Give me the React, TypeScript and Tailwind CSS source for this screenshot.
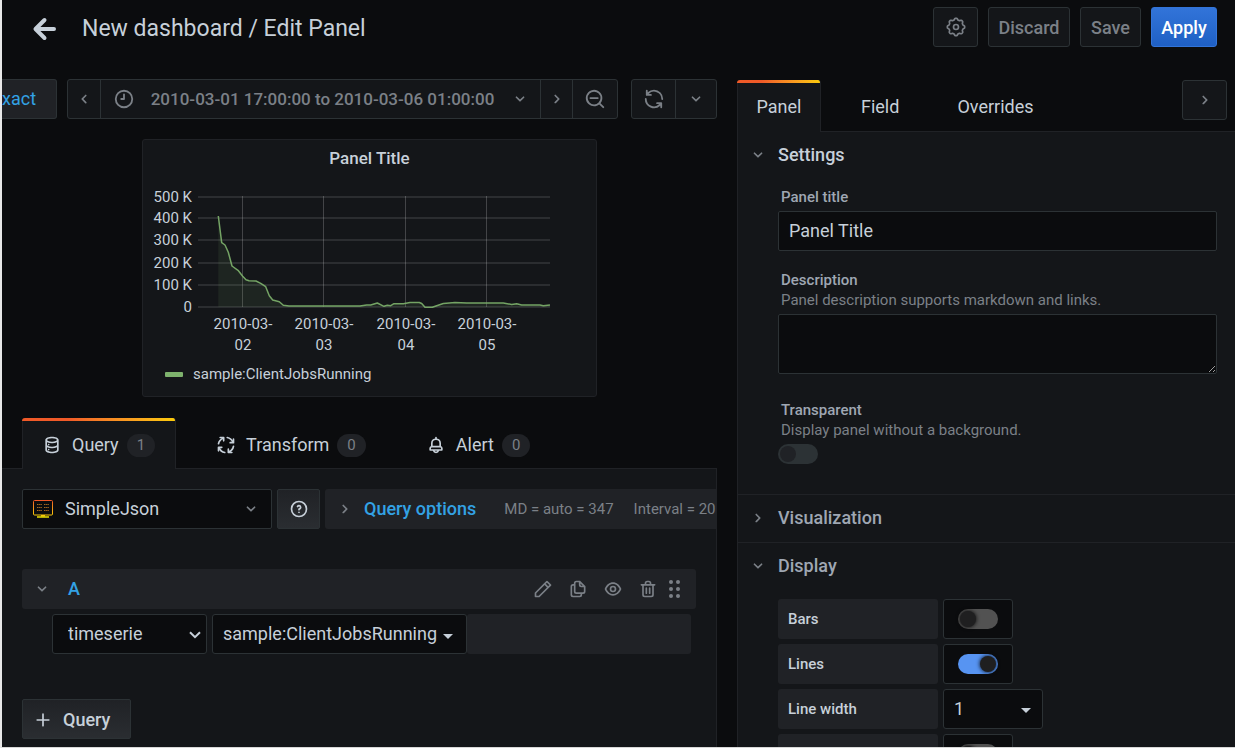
import React from "react";

const paths = {
  angleDown:
    "M17,9.17a1,1,0,0,0-1.41,0L12,12.71,8.46,9.17a1,1,0,0,0-1.41,0,1,1,0,0,0,0,1.42l4.24,4.24a1,1,0,0,0,1.42,0L17,10.59A1,1,0,0,0,17,9.17Z",
  angleRight:
    "M14.83,11.29,10.59,7.05a1,1,0,0,0-1.42,0,1,1,0,0,0,0,1.41L12.71,12,9.17,15.54a1,1,0,0,0,0,1.41,1,1,0,0,0,.71.29,1,1,0,0,0,.71-.29l4.24-4.24A1,1,0,0,0,14.83,11.29Z",
  angleLeft:
    "M11.29,12l3.54-3.54a1,1,0,0,0,0-1.41,1,1,0,0,0-1.42,0L9.17,11.29a1,1,0,0,0,0,1.42L13.41,17a1,1,0,0,0,.71.29,1,1,0,0,0,.71-.29,1,1,0,0,0,0-1.41Z",
  searchMinus:
    "M21.71,20.29,18,16.61A9,9,0,1,0,16.61,18l3.68,3.68a1,1,0,0,0,1.42,0A1,1,0,0,0,21.71,20.29ZM11,18a7,7,0,1,1,7-7A7,7,0,0,1,11,18Zm4-8H7a1,1,0,0,0,0,2h8a1,1,0,0,0,0-2Z",
  clock:
    "M12,2A10,10,0,1,0,22,12,10,10,0,0,0,12,2Zm0,18a8,8,0,1,1,8-8A8,8,0,0,1,12,20ZM12,6a1,1,0,0,0-1,1v4H9a1,1,0,0,0,0,2h3a1,1,0,0,0,1-1V7A1,1,0,0,0,12,6Z",
  sync:
    "M19.91,15.51H15.38a1,1,0,0,0,0,2h2.4A8,8,0,0,1,4,12a1,1,0,0,0-2,0,10,10,0,0,0,16.88,7.23V21a1,1,0,0,0,2,0V16.5A1,1,0,0,0,19.91,15.51ZM12,2A10,10,0,0,0,5.12,4.77V3a1,1,0,0,0-2,0V7.5a1,1,0,0,0,1,1h4.5a1,1,0,0,0,0-2H6.22A8,8,0,0,1,20,12a1,1,0,0,0,2,0A10,10,0,0,0,12,2Z",
  plus: "M19,11H13V5a1,1,0,0,0-2,0v6H5a1,1,0,0,0,0,2h6v6a1,1,0,0,0,2,0V13h6a1,1,0,0,0,0-2Z",
  question:
    "M11.29,15.29a1.58,1.58,0,0,0-.12.15.76.76,0,0,0-.09.18.64.64,0,0,0-.06.18,1.36,1.36,0,0,0,0,.2.84.84,0,0,0,.08.38.9.9,0,0,0,.54.54.94.94,0,0,0,.76,0,.9.9,0,0,0,.54-.54A1,1,0,0,0,13,16a1,1,0,0,0-.29-.71A1,1,0,0,0,11.29,15.29ZM12,2A10,10,0,1,0,22,12,10,10,0,0,0,12,2Zm0,18a8,8,0,1,1,8-8A8,8,0,0,1,12,20ZM12,7A3,3,0,0,0,9.4,8.5a1,1,0,1,0,1.73,1A1,1,0,0,1,12,9a1,1,0,0,1,0,2,1,1,0,0,0-1,1v1a1,1,0,0,0,2,0v-.18A3,3,0,0,0,12,7Z",
  trash:
    "M10,18a1,1,0,0,0,1-1V11a1,1,0,0,0-2,0v6A1,1,0,0,0,10,18ZM20,6H16V5a3,3,0,0,0-3-3H11A3,3,0,0,0,8,5V6H4A1,1,0,0,0,4,8H5V19a3,3,0,0,0,3,3h8a3,3,0,0,0,3-3V8h1a1,1,0,0,0,0-2ZM10,5a1,1,0,0,1,1-1h2a1,1,0,0,1,1,1V6H10Zm7,14a1,1,0,0,1-1,1H8a1,1,0,0,1-1-1V8H17Zm-3-1a1,1,0,0,0,1-1V11a1,1,0,0,0-2,0v6A1,1,0,0,0,14,18Z",
  eye:
    "M21.92,11.6C19.9,6.91,16.1,4,12,4S4.1,6.91,2.08,11.6a1,1,0,0,0,0,.8C4.1,17.09,7.9,20,12,20s7.9-2.91,9.92-7.6A1,1,0,0,0,21.92,11.6ZM12,18c-3.17,0-6.17-2.29-7.9-6C5.83,8.29,8.83,6,12,6s6.17,2.29,7.9,6C18.17,15.71,15.17,18,12,18ZM12,8a4,4,0,1,0,4,4A4,4,0,0,0,12,8Zm0,6a2,2,0,1,1,2-2A2,2,0,0,1,12,14Z",
  copy:
    "M21,8.94a1.31,1.31,0,0,0-.06-.27l0-.09a1.07,1.07,0,0,0-.19-.28h0l-6-6h0a1.07,1.07,0,0,0-.28-.19.32.32,0,0,0-.09,0A.88.88,0,0,0,14.05,2H10A3,3,0,0,0,7,5V6H6A3,3,0,0,0,3,9V19a3,3,0,0,0,3,3h8a3,3,0,0,0,3-3V18h1a3,3,0,0,0,3-3V9S21,9,21,8.94ZM15,5.41,17.59,8H16a1,1,0,0,1-1-1ZM15,19a1,1,0,0,1-1,1H6a1,1,0,0,1-1-1V9A1,1,0,0,1,6,8H7v7a3,3,0,0,0,3,3h5Zm4-4a1,1,0,0,1-1,1H10a1,1,0,0,1-1-1V5a1,1,0,0,1,1-1h3V7a3,3,0,0,0,3,3h3Z",
  pen:
    "M22,7.24a1,1,0,0,0-.29-.71L17.47,2.29A1,1,0,0,0,16.76,2a1,1,0,0,0-.71.29L13.22,5.12h0L2.29,16.05a1,1,0,0,0-.29.71V21a1,1,0,0,0,1,1H7.24A1,1,0,0,0,8,21.71L18.87,10.78h0L21.71,8a1.19,1.19,0,0,0,.22-.33,1,1,0,0,0,0-.24.7.7,0,0,0,0-.14ZM6.83,20H4V17.17l9.93-9.93,2.83,2.83ZM18.17,8.66,15.34,5.83l1.42-1.41,2.82,2.82Z",
  bell:
    "M18,13.18V10a6,6,0,0,0-5-5.91V3a1,1,0,0,0-2,0V4.09A6,6,0,0,0,6,10v3.18A3,3,0,0,0,4,16v2a1,1,0,0,0,1,1H8.14a4,4,0,0,0,7.72,0H19a1,1,0,0,0,1-1V16A3,3,0,0,0,18,13.18ZM8,10a4,4,0,0,1,8,0v3H8Zm4,10a2,2,0,0,1-1.72-1h3.44A2,2,0,0,1,12,20Zm6-3H6V16a1,1,0,0,1,1-1H17a1,1,0,0,1,1,1Z",
  database:
    "M8,16.5a1,1,0,1,0,1,1A1,1,0,0,0,8,16.5ZM12,2C8,2,4,3.37,4,6V18c0,2.63,4,4,8,4s8-1.37,8-4V6C20,3.37,16,2,12,2Zm6,16c0,.71-2.28,2-6,2s-6-1.29-6-2V14.73A13.16,13.16,0,0,0,12,16a13.16,13.16,0,0,0,6-1.27Zm0-6c0,.71-2.28,2-6,2s-6-1.29-6-2V8.73A13.16,13.16,0,0,0,12,10a13.16,13.16,0,0,0,6-1.27ZM12,8C8.28,8,6,6.71,6,6s2.28-2,6-2,6,1.29,6,2S15.72,8,12,8ZM8,10.5a1,1,0,1,0,1,1A1,1,0,0,0,8,10.5Z",
};

function Icon({ name, className = "size-5" }: { name: keyof typeof paths; className?: string }) {
  return (
    <svg viewBox="0 0 24 24" fill="currentColor" aria-hidden="true" className={`shrink-0 ${className}`}>
      <path d={paths[name]} />
    </svg>
  );
}

const gearOutline =
  Array.from({ length: 96 }, (_, i) => {
    const t = (i / 96) * Math.PI * 2;
    const r = 9.5 + 0.95 * Math.tanh(2 * Math.cos(8 * t));
    return `${i ? "L" : "M"}${(12 + r * Math.cos(t)).toFixed(2)} ${(12 + r * Math.sin(t)).toFixed(2)}`;
  }).join("") + "Z";

function GearIcon() {
  return (
    <svg viewBox="0 0 24 24" fill="none" stroke="currentColor" strokeWidth="2" strokeLinejoin="round" aria-hidden="true" className="size-5">
      <path d={gearOutline} />
      <circle cx="12" cy="12" r="3" />
    </svg>
  );
}

function ProcessIcon() {
  return (
    <svg viewBox="0 0 24 24" fill="none" stroke="currentColor" strokeWidth="2" strokeLinecap="round" strokeLinejoin="round" aria-hidden="true" className="size-5 shrink-0">
      {[0, 90, 180, 270].map((a) => (
        <g key={a} transform={`rotate(${a} 12 12)`}>
          <path d="M3 10.5A9 9 0 0 1 8.6 3.8" />
          <path d="M5 3H9.2V7" />
        </g>
      ))}
    </svg>
  );
}

function Caret() {
  return (
    <svg viewBox="0 0 10 5" aria-hidden="true" className="h-[5px] w-[10px] shrink-0 fill-[#c7d0d9]">
      <path d="M0 0h10L5 5z" />
    </svg>
  );
}

function MonitorLogo() {
  return (
    <svg viewBox="0 0 20 18" aria-hidden="true" className="h-[18px] w-5 shrink-0">
      <defs>
        <linearGradient id="monitor" x1="0" y1="0" x2="0" y2="1">
          <stop offset="0" stopColor="#f05a28" />
          <stop offset="1" stopColor="#fbca0a" />
        </linearGradient>
      </defs>
      <rect x="0.5" y="0.5" width="19" height="14.5" rx="1" fill="#0b0c0e" stroke="url(#monitor)" />
      <path d="M8 15h4v1.5H8z" fill="#fbca0a" />
      <path d="M4 17h12" stroke="#fff200" strokeWidth="1.4" />
      <path d="M4 4.5h5M11 4.5h5M4 7.5h5M11 7.5h5M4 10.5h5M11 10.5h5" stroke="#a8691f" strokeWidth="1.2" strokeDasharray="1.5 .6" />
    </svg>
  );
}

const yTicks = [
  { y: 197, label: "500 K" },
  { y: 218, label: "400 K" },
  { y: 240, label: "300 K" },
  { y: 263, label: "200 K" },
  { y: 285, label: "100 K" },
  { y: 307, label: "0" },
];
const xTicks = [
  { x: 242, label: "02" },
  { x: 323, label: "03" },
  { x: 405, label: "04" },
  { x: 486, label: "05" },
];
const series: [number, number][] = [
  [218.3, 216], [221.7, 242.7], [225, 245], [228.3, 252.3], [232, 266], [238, 270.3], [242.7, 276.3],
  [246, 279.7], [249, 280.7], [256, 281], [260.7, 283.3], [265.7, 286.7], [269.3, 295.7], [272.7, 300],
  [279.3, 301.7], [283.3, 305.3], [289, 306], [360, 306], [366.7, 305], [370.7, 305], [377.3, 303],
  [384, 306.3], [387.3, 305.3], [390.7, 305.7], [394, 303.7], [403.3, 303.7], [410, 302.5], [419.3, 302.5],
  [421.7, 303.5], [425, 307.3], [432.3, 307.3], [436.7, 305.7], [443.3, 303.5], [455, 302.5], [466.7, 303],
  [503.3, 303], [511.7, 304.5], [516.7, 303.7], [521.7, 305], [540, 305], [543.3, 305.7], [550, 305],
];
const linePath = series.map(([x, y], i) => `${i ? "L" : "M"}${x} ${y}`).join("");

function Chart() {
  return (
    <svg viewBox="143 177 453 181" role="img" aria-label="sample:ClientJobsRunning" className="block w-full">
      <g stroke="#2b2d30" strokeWidth="2">
        {yTicks.map((t) => (
          <path key={t.y} d={`M198 ${t.y}H550`} />
        ))}
      </g>
      <g stroke="#ffffff" strokeOpacity="0.2" strokeWidth="1">
        {xTicks.map((t) => (
          <path key={t.x} d={`M${t.x}.5 196V307`} />
        ))}
      </g>
      <path d={`${linePath}V307H218.3Z`} fill="#7eb26d" fillOpacity="0.1" />
      <path d={linePath} fill="none" stroke="#7eb26d" strokeOpacity="0.9" strokeWidth="1.5" strokeLinejoin="round" />
      <g fill="#c7d0d9" fontSize="15">
        {yTicks.map((t) => (
          <text key={t.y} x="192" y={t.y + 5} textAnchor="end">
            {t.label}
          </text>
        ))}
        {xTicks.map((t) => (
          <text key={t.x} x={t.x + 1} y="329" textAnchor="middle">
            2010-03-
            <tspan x={t.x + 1} dy="21">
              {t.label}
            </tspan>
          </text>
        ))}
      </g>
    </svg>
  );
}

function TabBar({ children }: { children: React.ReactNode }) {
  return (
    <div role="tablist" className="flex">
      {children}
    </div>
  );
}

const tabBase = "flex items-center whitespace-nowrap";
const tabActive = "overflow-hidden rounded-t-[3px] border-r border-[#202226] bg-[#141619]";
const tabIdle = "border-b border-[#202226]";

function Stripe() {
  return <span className="h-[3px] w-full bg-linear-to-r from-[#f05a28] from-30% to-[#fbca0a]" />;
}

function Badge({ n }: { n: number }) {
  return <span className="ml-2 rounded-full bg-[#202226] px-[10px] text-[15px] leading-[23px] text-[#7b8087]">{n}</span>;
}

const darkButton =
  "flex h-10 items-center justify-center rounded-[3px] border border-[#2c3235] bg-[#141619] text-[#7b8087]";

function Toolbar() {
  return (
    <div className="flex shrink-0 justify-end overflow-hidden text-[#7b8087]">
      <button className="mr-[10px] flex h-10 flex-1 items-center rounded-r-[3px] border border-l-0 border-[#2c3235] bg-[#202226] text-[#33a2e5]">
        xact
      </button>
      <div className="mr-[13px] flex h-10 rounded-[3px] border border-[#2c3235] bg-[#141619]">
        <button aria-label="Previous range" className="flex w-[33px] items-center justify-center border-r border-[#2c3235]">
          <Icon name="angleLeft" />
        </button>
        <button className="flex w-[440px] items-center border-r border-[#2c3235] pr-[10px] pl-3 text-[17px] font-medium whitespace-nowrap">
          <Icon name="clock" className="size-[22px]" />
          <span className="flex-1 text-center">2010-03-01 17:00:00 to 2010-03-06 01:00:00</span>
          <Icon name="angleDown" />
        </button>
        <button aria-label="Next range" className="flex w-8 items-center justify-center border-r border-[#2c3235]">
          <Icon name="angleRight" />
        </button>
        <button aria-label="Zoom out" className="flex w-11 items-center justify-center">
          <Icon name="searchMinus" className="size-[22px]" />
        </button>
      </div>
      <div className="flex h-10 rounded-[3px] border border-[#2c3235] bg-[#141619]">
        <button aria-label="Refresh" className="flex w-11 items-center justify-center border-r border-[#2c3235]">
          <Icon name="sync" className="size-[22px]" />
        </button>
        <button aria-label="Refresh interval" className="flex w-10 items-center justify-center">
          <Icon name="angleDown" />
        </button>
      </div>
    </div>
  );
}

function QueryEditor() {
  return (
    <section className="flex min-h-0 flex-1 flex-col">
      <TabBar>
        <span className="w-5 border-b border-[#202226]" />
        <button role="tab" aria-selected="true" className={`${tabBase} ${tabActive} h-[51px] flex-col`}>
          <Stripe />
          <span className="flex flex-1 items-center border-l border-[#202226] pr-5 pl-[19px]">
            <Icon name="database" />
            <span className="ml-[10px]">Query</span>
            <Badge n={1} />
          </span>
        </button>
        <button role="tab" aria-selected="false" className={`${tabBase} ${tabIdle} pt-1 pr-[30px] pl-10`}>
          <ProcessIcon />
          <span className="ml-[10px]">Transform</span>
          <Badge n={0} />
        </button>
        <button role="tab" aria-selected="false" className={`${tabBase} ${tabIdle} pt-1 pl-[30px]`}>
          <Icon name="bell" />
          <span className="ml-[10px]">Alert</span>
          <Badge n={0} />
        </button>
        <span className="flex-1 border-b border-[#202226]" />
      </TabBar>

      <div className="flex min-h-0 flex-1 flex-col overflow-hidden border-r border-[#202226] bg-[#141619] pt-5 pl-5">
        <div className="flex shrink-0 gap-[5px]">
          <button className="flex h-10 w-[250px] shrink-0 items-center rounded-[2px] border border-[#2c3235] bg-[#0b0c0e] px-[10px]">
            <MonitorLogo />
            <span className="ml-3 flex-1 text-left">SimpleJson</span>
            <Icon name="angleDown" className="size-5 text-[#7b8087]" />
          </button>
          <button
            aria-label="Data source help"
            className="flex h-10 w-[43px] shrink-0 items-center justify-center rounded-[2px] border border-[#2c3235] bg-linear-to-b from-[#202226] to-[#2a2d31]"
          >
            <Icon name="question" />
          </button>
          <button className="flex h-10 flex-1 items-center overflow-hidden rounded-l-[3px] bg-[#202226] pl-[10px] text-left whitespace-nowrap">
            <Icon name="angleRight" className="size-5 text-[#7b8087]" />
            <span className="ml-[9px] font-medium text-[#33a2e5]">Query options</span>
            <span className="ml-7 text-[15px] text-[#7b8087]">MD = auto = 347</span>
            <span className="ml-5 text-[15px] text-[#7b8087]">Interval = 20m</span>
          </button>
        </div>

        <div className="mt-10 mr-5 shrink-0">
          <div className="flex h-10 items-center rounded-[3px] bg-[#202226] pr-[11px] pl-[10px] text-[#7b8087]">
            <button aria-label="Collapse query A">
              <Icon name="angleDown" />
            </button>
            <span className="ml-4 flex-1 font-medium text-[#33a2e5]">A</span>
            <div className="flex items-center gap-[15px]">
              <button aria-label="Edit"><Icon name="pen" /></button>
              <button aria-label="Duplicate"><Icon name="copy" /></button>
              <button aria-label="Hide"><Icon name="eye" /></button>
              <button aria-label="Remove"><Icon name="trash" /></button>
            </div>
            <svg viewBox="0 0 20 20" fill="currentColor" aria-hidden="true" className="ml-[7px] size-5">
              {[3, 10, 17].map((y) => (
                <g key={y}>
                  <circle cx="6" cy={y} r="2" />
                  <circle cx="13" cy={y} r="2" />
                </g>
              ))}
            </svg>
          </div>
          <div className="mt-[5px] mr-[5px] ml-[30px] flex">
            <div className="relative mr-[5px] w-[155px]">
              <select
                aria-label="Query type"
                defaultValue="timeserie"
                className="h-10 w-full appearance-none rounded-[3px] border border-[#2c3235] bg-[#0b0c0e] pl-[15px]"
              >
                <option>timeserie</option>
              </select>
              <svg viewBox="0 0 12 8" fill="none" stroke="currentColor" strokeWidth="2" aria-hidden="true" className="pointer-events-none absolute top-[17px] right-[6px] h-2 w-3">
                <path d="M1 1.2l5 5 5-5" />
              </svg>
            </div>
            <button className="flex h-10 w-[255px] items-center justify-between rounded-[3px] border border-[#2c3235] bg-[#0b0c0e] pr-[13px] pl-[10px]">
              <span>sample:ClientJobsRunning</span>
              <span className="pt-[5px]"><Caret /></span>
            </button>
            <div className="h-10 flex-1 rounded-[3px] bg-[#202226]" />
          </div>
        </div>

        <div className="mt-[45px] shrink-0">
          <button className="flex h-10 items-center rounded-[2px] border border-[#2c3235] bg-linear-to-b from-[#202226] to-[#2a2d31] pt-px pr-5 pl-[10px] font-medium">
            <Icon name="plus" />
            <span className="ml-[10px]">Query</span>
          </button>
        </div>
      </div>
    </section>
  );
}

function SectionHeader({ title, open, strong }: { title: string; open: boolean; strong?: boolean }) {
  return (
    <button
      aria-expanded={open}
      className={`flex h-[47px] w-full items-center pb-[2px] pl-[10px] font-medium ${strong ? "text-[#c7d0d9]" : "text-[#9fa7b3]"}`}
    >
      <Icon name={open ? "angleDown" : "angleRight"} className="size-5 text-[#7b8087]" />
      <span className="ml-[10px]">{title}</span>
    </button>
  );
}

const switchBase =
  "block h-5 w-10 appearance-none rounded-full before:block before:size-4 before:rounded-full before:content-['']";

function DisplayRow({ id, label, children }: { id: string; label: string; children: React.ReactNode }) {
  return (
    <div className="flex gap-[5px]">
      <label htmlFor={id} className="flex h-10 w-40 items-center rounded-[3px] bg-[#202226] px-[10px] text-[15px] font-medium">
        {label}
      </label>
      {children}
    </div>
  );
}

function SwitchBox({ id, on }: { id: string; on?: boolean }) {
  return (
    <div className="flex h-10 w-[70px] items-center justify-center rounded-[3px] border border-[#2c3235] bg-[#0b0c0e]">
      <input
        id={id}
        type="checkbox"
        defaultChecked={on}
        className={`${switchBase} bg-[#525252] p-[2px] before:bg-[#1f1f20] before:shadow-[0_0_4px_#000] checked:bg-[#5794f2] checked:before:ml-5`}
      />
    </div>
  );
}

function OptionsPane() {
  return (
    <aside className="flex w-[498px] shrink-0 flex-col pt-px">
      <div className="flex">
        <div role="tablist" className="flex flex-1">
          <button role="tab" aria-selected="true" className={`${tabBase} ${tabActive} h-[52px] w-[84px] flex-col`}>
            <Stripe />
            <span className="flex w-full flex-1 items-center justify-center border-l border-[#202226] pb-[2px]">Panel</span>
          </button>
          <button role="tab" aria-selected="false" className={`${tabBase} ${tabIdle} pt-[3px] pr-[30px] pl-10`}>Field</button>
          <button role="tab" aria-selected="false" className={`${tabBase} ${tabIdle} pt-[3px] pl-7`}>Overrides</button>
          <span className="flex-1 border-b border-[#202226]" />
        </div>
        <div className="border-b border-[#202226] pr-2">
          <button aria-label="Hide options" className={`${darkButton} w-[45px]`}>
            <Icon name="angleRight" />
          </button>
        </div>
      </div>

      <div className="min-h-0 flex-1 overflow-hidden border-l border-[#202226] bg-[#141619]">
        <SectionHeader title="Settings" open strong />
        <div className="flex flex-col pt-2 pr-[18px] pb-[30px] pl-10">
          <label htmlFor="title" className="pl-[3px] text-[15px] leading-5 font-medium text-[#9fa7b3]">Panel title</label>
          <input
            id="title"
            defaultValue="Panel Title"
            className="mt-1 h-10 rounded-[2px] border border-[#2c3235] bg-[#0b0c0e] px-[10px] pb-px"
          />
          <label htmlFor="description" className="mt-[19px] pl-[3px] text-[15px] leading-5 text-[#7b8087]">
            <span className="block font-medium text-[#9fa7b3]">Description</span>
            Panel description supports markdown and links.
          </label>
          <textarea id="description" className="mt-1 block h-[60px] resize-y rounded-[2px] border border-[#2c3235] bg-[#0b0c0e] px-[10px]" />
          <label htmlFor="transparent" className="mt-[26px] mb-1 pl-[3px] text-[15px] leading-5 text-[#7b8087]">
            <span className="block font-medium text-[#9fa7b3]">Transparent</span>
            Display panel without a background.
          </label>
          <input id="transparent" type="checkbox" className={`${switchBase} bg-[#2c3235] p-[2px] before:bg-[#202226]`} />
        </div>
        <div className="border-t border-[#202226]">
          <SectionHeader title="Visualization" open={false} />
        </div>
        <div className="border-t border-[#202226]">
          <SectionHeader title="Display" open />
          <div className="flex flex-col gap-[5px] pt-[9px] pl-10">
            <DisplayRow id="bars" label="Bars"><SwitchBox id="bars" /></DisplayRow>
            <DisplayRow id="lines" label="Lines"><SwitchBox id="lines" on /></DisplayRow>
            <DisplayRow id="width" label="Line width">
              <div className="relative w-[100px]">
                <select id="width" defaultValue="1" className="h-10 w-full appearance-none rounded-[3px] border border-[#2c3235] bg-[#0b0c0e] pl-[10px]">
                  <option>1</option>
                </select>
                <span className="pointer-events-none absolute top-[19px] right-3 flex"><Caret /></span>
              </div>
            </DisplayRow>
            <DisplayRow id="staircase" label=""><SwitchBox id="staircase" /></DisplayRow>
          </div>
        </div>
      </div>
    </aside>
  );
}

export default function App() {
  return (
    <div className="flex h-screen flex-col overflow-hidden border-b border-l-2 border-b-[#d8d8d8] border-l-[#e8e8e8] bg-[#0b0c0e] font-['Roboto',sans-serif] text-[18px] leading-6 text-[#c7d0d9]">
      <header className="flex h-[54px] shrink-0 items-center pr-[18px] pl-[30px]">
        <button aria-label="Back" className="mt-1">
          <svg viewBox="0 0 24 24" fill="none" stroke="currentColor" strokeWidth="4" strokeLinecap="round" strokeLinejoin="round" aria-hidden="true" className="size-6">
            <path d="M12.5 3L3.5 12l9 9M4 12h18" />
          </svg>
        </button>
        <h1 className="ml-[26px] flex-1 pt-[3px] text-[23px]">New dashboard / Edit Panel</h1>
        <div className="flex gap-[10px] font-medium">
          <button aria-label="Settings" className={`${darkButton} w-[45px]`}><GearIcon /></button>
          <button className={`${darkButton} w-[82px] pt-px`}>Discard</button>
          <button className={`${darkButton} w-[61px] pt-px`}>Save</button>
          <button className="flex h-10 w-[66px] items-center justify-center rounded-[3px] border border-[#3274d9] bg-linear-to-b from-[#3274d9] to-[#1f60c4] pt-px text-white">
            Apply
          </button>
        </div>
      </header>

      <div className="mt-[25px] flex min-h-0 flex-1 gap-5">
        <main className="flex min-w-0 flex-1 flex-col">
          <Toolbar />
          <article className="mx-auto mt-5 mb-[21px] w-[455px] shrink-0 translate-x-[10px] rounded-[3px] border border-[#202226] bg-[#141619]">
            <h2 className="pt-[6px] pb-[7px] text-center text-[17px] font-medium">Panel Title</h2>
            <Chart />
            <div className="flex h-[38px] items-center gap-[10px] pb-[6px] pl-[22px] text-[15px]">
              <span className="h-[5px] w-[18px] rounded-[1px] bg-[#7eb26d]" />
              sample:ClientJobsRunning
            </div>
          </article>
          <QueryEditor />
        </main>
        <OptionsPane />
      </div>
    </div>
  );
}
